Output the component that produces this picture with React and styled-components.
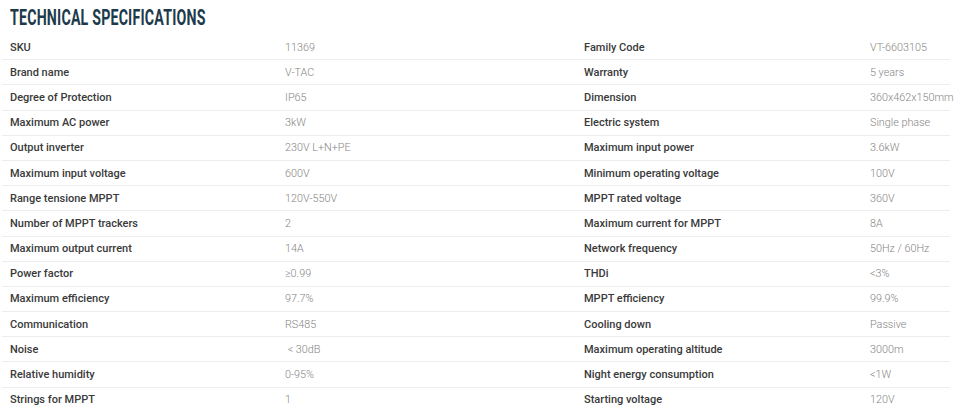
import React from "react";
import styled, { createGlobalStyle } from "styled-components";

const Global = createGlobalStyle`
  html, body { margin: 0; padding: 0; background: #ffffff; }
  body { font-family: Roboto, "Liberation Sans", sans-serif; }
`;

const Page = styled.div`
  width: 960px;
  height: 418px;
  overflow: hidden;
  background: #fff;
`;

const Title = styled.h2`
  margin: 0;
  padding: 6px 0 0 10px;
  height: 29px;
  box-sizing: border-box;
  font-family: Roboto, "Liberation Sans", sans-serif;
  font-weight: 700;
  font-size: 22px;
  line-height: 24px;
  color: #1d3b4b;
  text-transform: uppercase;
  white-space: nowrap;
`;

const TitleText = styled.span`
  display: inline-block;
  transform: scaleX(0.645);
  transform-origin: left center;
  letter-spacing: 0.3px;
`;

const Table = styled.div`
  margin: 6px 0 0 2px;
  width: 948px;
  display: flex;
  flex-direction: column;
`;

const Row = styled.div`
  display: grid;
  grid-template-columns: 275px 299px 286px 1fr;
  align-items: center;
  height: 25.2px;
  box-sizing: border-box;
  padding-left: 8px;
  border-bottom: 1px solid ${(p) => (p.$last ? "transparent" : "#ededed")};
`;

const Label = styled.div`
  font-family: Roboto, "Liberation Sans", sans-serif;
  font-weight: 500;
  font-size: 11px;
  color: #3a3a3a;
  white-space: nowrap;
`;

const Value = styled.div`
  font-family: Roboto, "Liberation Sans", sans-serif;
  font-weight: 300;
  font-size: 10.8px;
  color: #858585;
  white-space: nowrap;
`;

const rows = [
  ["SKU", "11369", "Family Code", "VT-6603105"],
  ["Brand name", "V-TAC", "Warranty", "5 years"],
  ["Degree of Protection", "IP65", "Dimension", "360x462x150mm"],
  ["Maximum AC power", "3kW", "Electric system", "Single phase"],
  ["Output inverter", "230V L+N+PE", "Maximum input power", "3.6kW"],
  ["Maximum input voltage", "600V", "Minimum operating voltage", "100V"],
  ["Range tensione MPPT", "120V-550V", "MPPT rated voltage", "360V"],
  ["Number of MPPT trackers", "2", "Maximum current for MPPT", "8A"],
  ["Maximum output current", "14A", "Network frequency", "50Hz / 60Hz"],
  ["Power factor", "≥0.99", "THDi", "<3%"],
  ["Maximum efficiency", "97.7%", "MPPT efficiency", "99.9%"],
  ["Communication", "RS485", "Cooling down", "Passive"],
  ["Noise", "\u00a0< 30dB", "Maximum operating altitude", "3000m"],
  ["Relative humidity", "0-95%", "Night energy consumption", "<1W"],
  ["Strings for MPPT", "1", "Starting voltage", "120V"],
];

export default function App() {
  return (
    <Page>
      <Global />
      <Title>
        <TitleText>Technical Specifications</TitleText>
      </Title>
      <Table>
        {rows.map((r, i) => (
          <Row key={i} $last={i === rows.length - 1}>
            <Label>{r[0]}</Label>
            <Value>{r[1]}</Value>
            <Label>{r[2]}</Label>
            <Value>{r[3]}</Value>
          </Row>
        ))}
      </Table>
    </Page>
  );
}
